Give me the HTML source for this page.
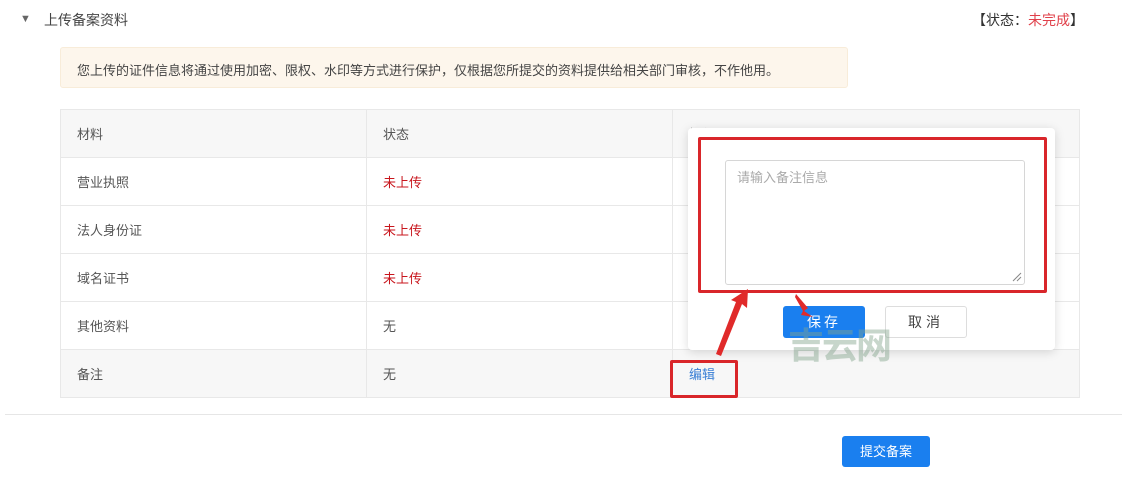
<!DOCTYPE html>
<html><head><meta charset="utf-8"><style>
*{margin:0;padding:0;box-sizing:border-box}
body{width:1122px;height:478px;background:#fff;position:relative;overflow:hidden;font-family:"Liberation Sans","Noto Sans CJK SC",sans-serif;font-size:13px;color:#333}
.a{position:absolute}
table{border-collapse:collapse;position:absolute;left:60px;top:109px;width:1020px}
td{border:1px solid #e8e8e8;height:48px;padding-left:16px;font-size:13px;color:#555}
tr.g td{background:#f7f7f7}
.red{color:#c8161d}
</style></head><body>
<div class="a" style="left:20px;top:13px;font-size:11px;color:#666">▼</div>
<div class="a" style="left:44px;top:10px;font-size:14px;color:#444">上传备案资料</div>
<div class="a" style="left:972px;top:10px;font-size:14px;color:#333">【状态：<span style="color:#e0404a">未完成</span>】</div>
<div class="a" style="left:60px;top:47px;width:788px;height:41px;background:#fdf6ec;border:1px solid #f8ecd9;border-radius:3px;padding:12px 0 0 16px;font-size:13px;color:#444">您上传的证件信息将通过使用加密、限权、水印等方式进行保护，仅根据您所提交的资料提供给相关部门审核，不作他用。</div>
<table>
<tr class="g"><td style="width:306px">材料</td><td style="width:306px">状态</td><td>操作</td></tr>
<tr><td>营业执照</td><td class="red">未上传</td><td></td></tr>
<tr><td>法人身份证</td><td class="red">未上传</td><td></td></tr>
<tr><td>域名证书</td><td class="red">未上传</td><td></td></tr>
<tr><td>其他资料</td><td>无</td><td></td></tr>
<tr class="g"><td>备注</td><td>无</td><td style="color:#3a7fd5">编辑</td></tr>
</table>
<div class="a" style="left:5px;top:414px;width:1117px;height:1px;background:#e6e6e6"></div>
<div class="a" style="left:842px;top:436px;width:88px;height:31px;background:#1a7fef;border-radius:3px;color:#fff;font-size:13px;text-align:center;line-height:31px">提交备案</div>
<div class="a" style="left:688px;top:128px;width:367px;height:222px;background:#fff;border-radius:4px;box-shadow:0 2px 10px rgba(0,0,0,.15)"></div>
<div class="a" style="left:725px;top:160px;width:300px;height:125px;border:1px solid #d6d6d6;border-radius:3px;padding:6px 11px;font-size:13px;color:#aaa">请输入备注信息</div>
<svg class="a" style="left:1012px;top:272px" width="10" height="10"><path d="M9 1 L1 9 M9 5 L5 9" stroke="#888" stroke-width="1"/></svg>
<div class="a" style="left:698px;top:137px;width:349px;height:156px;border:3px solid #d9262a;border-radius:2px"></div>
<div class="a" style="left:783px;top:306px;width:82px;height:32px;background:#1a7fef;border-radius:3px;color:#fff;font-size:14px;text-align:center;line-height:32px;letter-spacing:3px">保存</div>
<div class="a" style="left:885px;top:306px;width:82px;height:32px;border:1px solid #ddd;border-radius:3px;color:#444;font-size:14px;text-align:center;line-height:30px;letter-spacing:4px">取消</div>
<div class="a" style="left:788px;top:326px;font-size:36px;line-height:40px;font-weight:bold;color:rgba(130,165,140,.45);letter-spacing:-2px">吉云网</div>
<div class="a" style="left:670px;top:360px;width:68px;height:38px;border:3px solid #d9262a;border-radius:2px"></div>
<svg class="a" style="left:700px;top:280px" width="120" height="100">
<path d="M16 74 L36 22 L31 20 L48 9 L47 28 L42 24 L21 76 Z" fill="#e02a2a"/>
<path d="M96 14 L108 28 L104 31 L113 37 L101 35 L103 31 L95 17 Z" fill="#e02a2a"/>
</svg>
</body></html>
